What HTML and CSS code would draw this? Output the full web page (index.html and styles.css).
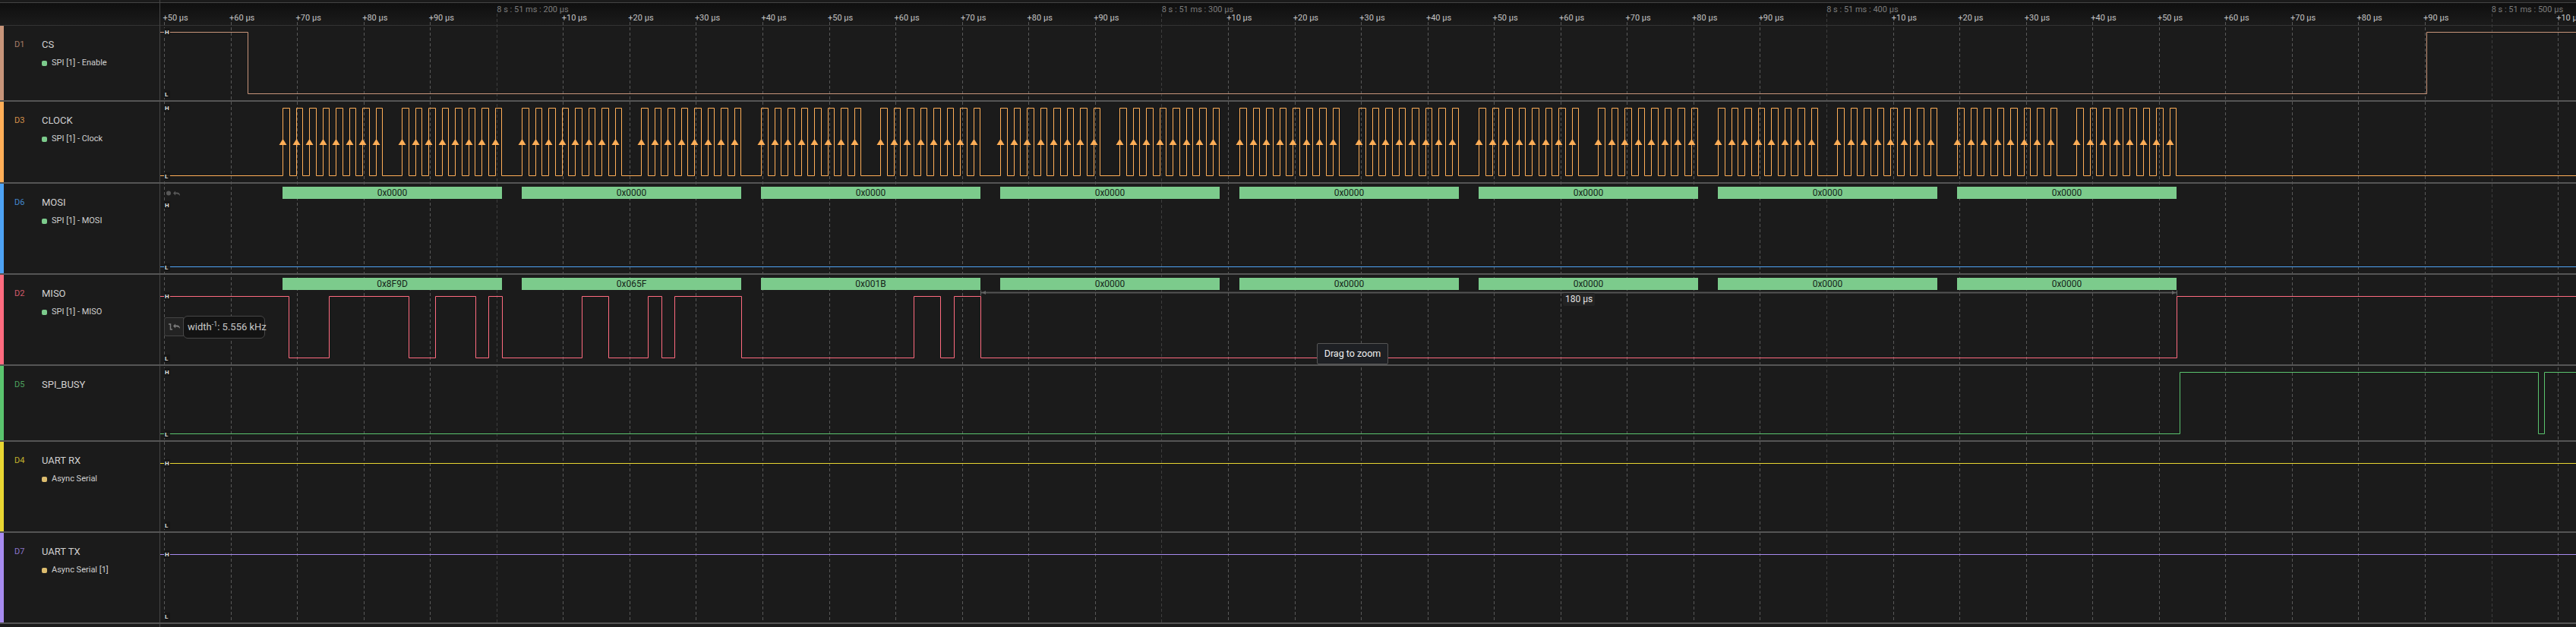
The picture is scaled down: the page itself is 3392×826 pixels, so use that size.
FILE: index.html
```html
<!DOCTYPE html>
<html lang="en">
<head>
  <meta charset="UTF-8">
  <meta name="viewport" content="width=device-width, initial-scale=1.0">
  <title>Logic capture</title>
  <link rel="stylesheet" href="styles.css">
</head>
<body>
  <div class="app">
    <svg id="traces" class="traces" width="3392" height="826"></svg>

    <div class="ruler">
      <span class="tick">+50 µs</span><span class="tick">+60 µs</span><span class="tick">+70 µs</span><span class="tick">+80 µs</span><span class="tick">+90 µs</span>
      <span class="tick major">8 s : 51 ms : 200 µs</span>
      <span class="tick">+10 µs</span><span class="tick">+20 µs</span><span class="tick">+30 µs</span><span class="tick">+40 µs</span><span class="tick">+50 µs</span><span class="tick">+60 µs</span><span class="tick">+70 µs</span><span class="tick">+80 µs</span><span class="tick">+90 µs</span>
      <span class="tick major">8 s : 51 ms : 300 µs</span>
      <span class="tick">+10 µs</span><span class="tick">+20 µs</span><span class="tick">+30 µs</span><span class="tick">+40 µs</span><span class="tick">+50 µs</span><span class="tick">+60 µs</span><span class="tick">+70 µs</span><span class="tick">+80 µs</span><span class="tick">+90 µs</span>
      <span class="tick major">8 s : 51 ms : 400 µs</span>
      <span class="tick">+10 µs</span><span class="tick">+20 µs</span><span class="tick">+30 µs</span><span class="tick">+40 µs</span><span class="tick">+50 µs</span><span class="tick">+60 µs</span><span class="tick">+70 µs</span><span class="tick">+80 µs</span><span class="tick">+90 µs</span>
      <span class="tick major">8 s : 51 ms : 500 µs</span>
      <span class="tick">+10 µs</span>
    </div>

    <div class="channel short ch-cs">
      <div class="strip"></div>
      <div class="label">
        <span class="index">D1</span>
        <div class="info">
          <div class="name">CS</div>
          <div class="analyzer"><i class="dot"></i>SPI [1] - Enable</div>
        </div>
      </div>
      <div class="plot"></div>
    </div>

    <div class="channel mid ch-clock">
      <div class="strip"></div>
      <div class="label">
        <span class="index">D3</span>
        <div class="info">
          <div class="name">CLOCK</div>
          <div class="analyzer"><i class="dot"></i>SPI [1] - Clock</div>
        </div>
      </div>
      <div class="plot"></div>
    </div>

    <div class="channel ch-mosi">
      <div class="strip"></div>
      <div class="label">
        <span class="index">D6</span>
        <div class="info">
          <div class="name">MOSI</div>
          <div class="analyzer"><i class="dot"></i>SPI [1] - MOSI</div>
        </div>
      </div>
      <div class="plot">
        <svg class="record-icon" width="18" height="7" viewBox="0 0 18 7">
          <circle cx="3" cy="3.5" r="3"></circle>
          <path d="M9 3.5L12 .5V2.5H14C16.5 2.5 18 4 18 7C17 5.5 15.5 4.5 14 4.5H12V6.5Z"></path>
        </svg>
        <div class="frames">
          <div class="frame">0x0000</div><div class="frame">0x0000</div><div class="frame">0x0000</div><div class="frame">0x0000</div>
          <div class="frame">0x0000</div><div class="frame">0x0000</div><div class="frame">0x0000</div><div class="frame">0x0000</div>
        </div>
      </div>
    </div>

    <div class="channel ch-miso">
      <div class="strip"></div>
      <div class="label">
        <span class="index">D2</span>
        <div class="info">
          <div class="name">MISO</div>
          <div class="analyzer"><i class="dot"></i>SPI [1] - MISO</div>
        </div>
      </div>
      <div class="plot">
        <div class="frames">
          <div class="frame">0x8F9D</div><div class="frame">0x065F</div><div class="frame">0x001B</div><div class="frame">0x0000</div>
          <div class="frame">0x0000</div><div class="frame">0x0000</div><div class="frame">0x0000</div><div class="frame">0x0000</div>
        </div>
        <div class="pulse-btn">
          <svg width="15" height="9" viewBox="0 0 15 9">
            <path class="pulse-line" d="M0 1H2.5V8H5"></path>
            <path class="pulse-undo" d="M6 3.5L9 .5V2.5H11C13.5 2.5 15 4 15 7C14 5.5 12.5 4.5 11 4.5H9V6.5Z"></path>
          </svg>
        </div>
        <div class="measure-tip">width<sup>-1</sup>: 5.556 kHz</div>
        <div class="span-label">180 µs</div>
        <div class="zoom-tip">Drag to zoom</div>
      </div>
    </div>

    <div class="channel short ch-busy">
      <div class="strip"></div>
      <div class="label">
        <span class="index">D5</span>
        <div class="info">
          <div class="name">SPI_BUSY</div>
        </div>
      </div>
      <div class="plot"></div>
    </div>

    <div class="channel ch-rx">
      <div class="strip"></div>
      <div class="label">
        <span class="index">D4</span>
        <div class="info">
          <div class="name">UART RX</div>
          <div class="analyzer"><i class="dot serial"></i>Async Serial</div>
        </div>
      </div>
      <div class="plot"></div>
    </div>

    <div class="channel ch-tx">
      <div class="strip"></div>
      <div class="label">
        <span class="index">D7</span>
        <div class="info">
          <div class="name">UART TX</div>
          <div class="analyzer"><i class="dot serial"></i>Async Serial [1]</div>
        </div>
      </div>
      <div class="plot"></div>
    </div>
  </div>

  <script src="script.js"></script>
</body>
</html>
```

FILE: styles.css
```css
html, body {
  margin: 0;
  padding: 0;
  height: 100%;
  overflow: hidden;
  background-color: #1b1b1b;
}

.app {
  position: relative;
  width: 3392px;
  height: 826px;
  padding-top: 3px;
  box-sizing: border-box;
  font-family: Roboto, "Liberation Sans", sans-serif;
  color: #d0d0d0;
}

.traces {
  position: absolute;
  top: 0;
  left: 0;
  z-index: 1;
  pointer-events: none;
}

.traces text {
  font-family: Roboto, "Liberation Sans", sans-serif;
  font-size: 8px;
  font-weight: 700;
  fill: #e0e0e0;
}

/* time ruler */
.ruler {
  display: flex;
  box-sizing: border-box;
  height: 31px;
  padding-left: 214.5px;
  border-top: 1px solid #444;
  border-bottom: 1px solid #333;
  background: linear-gradient(#0f0f0f, #1b1b1b);
  overflow: hidden;
}

.tick {
  flex: 0 0 87.56px;
  min-width: 0;
  box-sizing: border-box;
  padding-top: 13px;
  font-size: 11px;
  line-height: 13px;
  color: #c4c4c4;
  white-space: nowrap;
}

.tick.major {
  padding: 2px 0 0 2px;
  color: #7c7c7c;
}

/* channel rows */
.channel {
  position: relative;
  z-index: 2;
  display: flex;
  box-sizing: border-box;
  height: 120px;
  border-bottom: 2px solid #555;
}

.channel.short { height: 100px; }
.channel.mid { height: 108px; }

.ch-cs { --ch: #c8957a; }
.ch-clock { --ch: #ffae57; }
.ch-mosi { --ch: #4ea3f5; }
.ch-miso { --ch: #ff6b7f; }
.ch-busy { --ch: #5ac46e; }
.ch-rx { --ch: #e8d632; }
.ch-tx { --ch: #a78bf0; }

.strip {
  width: 5px;
  background-color: var(--ch);
}

.label {
  display: flex;
  box-sizing: border-box;
  width: 206px;
  padding: 17px 0 0 14px;
}

.index {
  width: 36px;
  font-size: 11px;
  line-height: 16px;
  color: var(--ch);
  opacity: 0.8;
}

.name {
  font-size: 13px;
  line-height: 16px;
  color: #d0d0d0;
}

.analyzer {
  display: flex;
  align-items: center;
  margin-top: 8px;
  font-size: 11px;
  line-height: 16px;
  color: #d0d0d0;
}

.dot {
  width: 7px;
  height: 7px;
  margin-right: 6px;
  border-radius: 2px;
  background-color: #7ccb8c;
}

.dot.serial { background-color: #dcbc6e; }

.plot {
  position: relative;
  flex: 1;
}

/* decoded SPI frames */
.frames {
  display: flex;
  gap: 26px;
  padding: 4px 0 0 161px;
}

.frame {
  flex: 0 0 289px;
  height: 16px;
  background-color: #7ccb8c;
  color: #16251a;
  font-size: 12px;
  line-height: 16px;
  text-align: center;
}

.record-icon {
  position: absolute;
  top: 9px;
  left: 8px;
  fill: #585858;
}

/* overlays on the MISO row */
.pulse-btn {
  position: absolute;
  top: 56px;
  left: 5px;
  display: flex;
  align-items: center;
  justify-content: center;
  box-sizing: border-box;
  width: 26px;
  height: 25px;
  background-color: #232323;
  border: 1px solid #444;
  border-radius: 3px 0 0 3px;
}

.pulse-line {
  fill: none;
  stroke: #7c7c7c;
  stroke-width: 1.5;
}

.pulse-undo { fill: #7c7c7c; }

.measure-tip {
  position: absolute;
  top: 54px;
  left: 30px;
  box-sizing: border-box;
  width: 108px;
  height: 30px;
  padding-left: 5px;
  background-color: #131313;
  border: 1px solid #474747;
  border-radius: 6px;
  font-size: 13px;
  line-height: 28px;
  color: #c8c8c8;
  white-space: nowrap;
}

.measure-tip sup {
  font-size: 9px;
  line-height: 0;
}

.span-label {
  position: absolute;
  top: 24px;
  left: 1847px;
  padding: 0 3px;
  background-color: #232323;
  border-radius: 2px;
  font-size: 12px;
  line-height: 17px;
  color: #e0e0e0;
}

.zoom-tip {
  position: absolute;
  top: 90px;
  left: 1523px;
  box-sizing: border-box;
  width: 94px;
  height: 28px;
  background-color: #1e2024;
  border: 1px solid #555;
  border-radius: 2px;
  font-size: 12.5px;
  line-height: 26px;
  text-align: center;
  color: #f0f0f0;
}
```

FILE: script.js
```js
const svg = document.getElementById('traces');
const NS = 'http://www.w3.org/2000/svg';
const LEFT = 211;
const RIGHT = 3392;

function add(tag, attrs) {
  const el = document.createElementNS(NS, tag);
  for (const key in attrs) el.setAttribute(key, attrs[key]);
  svg.appendChild(el);
  return el;
}

function px(x) {
  return Math.round(x) + 0.5;
}

// grid: one line per 10 us, every tenth is a dimmer "major" one
const PITCH = 87.56;
for (let i = 0; i < 37; i++) {
  const x = px(216 + i * PITCH);
  const major = i % 10 === 5;
  add('line', {
    x1: x, x2: x, y1: major ? 18 : 29, y2: 820,
    stroke: major ? '#3d3d3d' : '#585858',
    'stroke-dasharray': '4 3'
  });
}
add('line', { x1: 210.5, x2: 210.5, y1: 0, y2: 826, stroke: '#454545' });

// step wave from a start level and a list of edge positions
function wave(color, yHigh, yLow, startHigh, edges) {
  let high = startHigh;
  let d = 'M' + LEFT + ' ' + (high ? yHigh : yLow);
  edges.forEach(function(x) {
    high = !high;
    d += 'H' + px(x) + 'V' + (high ? yHigh : yLow);
  });
  d += 'H' + RIGHT;
  add('path', { d: d, fill: 'none', stroke: color });
}

// SPI clock: 8 words, each 2 bytes of 8 bits
const clockEdges = [];
const rises = [];
for (let w = 0; w < 8; w++) {
  for (let b = 0; b < 2; b++) {
    for (let i = 0; i < 8; i++) {
      const rise = 372 + w * 315 + b * 157 + i * 17.52;
      clockEdges.push(rise, rise + 8.76);
      rises.push(rise);
    }
  }
}

wave('#c8957a', 42.5, 123.5, true, [326, 3195]);
wave('#ffae57', 142.5, 231.5, false, clockEdges);
wave('#4ea3f5', 270.5, 351.5, false, []);
wave('#ff6b7f', 390.5, 471.5, true, [380, 433, 538, 573, 626, 643, 661, 766, 801, 853, 871, 888, 976, 1203, 1238, 1256, 1291, 2866]);
wave('#5ac46e', 490.5, 571.5, false, [2870, 3342, 3350]);
wave('#e8d632', 610.5, 691.5, true, []);
wave('#a78bf0', 730.5, 811.5, true, []);

rises.forEach(function(x) {
  const c = px(x);
  add('path', { d: 'M' + c + ' 183L' + (c + 5) + ' 191H' + (c - 5) + 'Z', fill: '#ffae57' });
});

// high / low badges on the left of every row
const levels = [[42, 124], [142, 232], [270, 352], [390, 472], [490, 572], [610, 692], [730, 812]];
levels.forEach(function(pair) {
  ['H', 'L'].forEach(function(letter, n) {
    const y = pair[n];
    add('rect', { x: 216, y: y - 5, width: 8, height: 10, fill: '#141414', 'fill-opacity': 0.85 });
    const t = add('text', { x: 217, y: y + 3 });
    t.textContent = letter;
  });
});

// measured span on the MISO row
add('rect', { x: 1291, y: 384.5, width: 1575, height: 2, fill: '#555' });
add('path', { d: 'M1291 382.5H1292V389.5H1291ZM1293 385.5L1298 383V388Z', fill: '#666' });
add('path', { d: 'M2866 382.5H2867V389.5H2866ZM2865 385.5L2860 383V388Z', fill: '#666' });
```
